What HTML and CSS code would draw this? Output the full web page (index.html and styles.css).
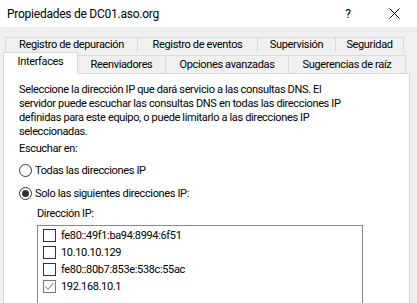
FILE: index.html
```html
<!DOCTYPE html>
<html lang="es">
<head>
    <meta charset="UTF-8">
    <title>Propiedades de DC01.aso.org</title>
    <link rel="stylesheet" href="styles.css">
</head>
<body>
    <div class="titlebar">
        <span class="title">Propiedades de DC01.aso.org</span>
        <span class="help">?</span>
        <span class="close">
            <svg width="11" height="11" viewBox="0 0 11 11"><path d="M0.5 0.5L10.5 10.5M10.5 0.5L0.5 10.5" stroke="#000" stroke-width="1"/></svg>
        </span>
    </div>

    <div class="dialog">
        <div class="tabs tabs-top">
            <div class="tab" style="width:133px">Registro de depuración</div>
            <div class="tab" style="width:121px">Registro de eventos</div>
            <div class="tab" style="width:79px">Supervisión</div>
            <div class="tab" style="width:69px">Seguridad</div>
        </div>
        <div class="tabs tabs-bottom">
            <div class="tab active" style="width:75px">Interfaces</div>
            <div class="tab" style="width:89px">Reenviadores</div>
            <div class="tab" style="width:124px">Opciones avanzadas</div>
            <div class="tab" style="width:118px">Sugerencias de raíz</div>
        </div>

        <div class="panel">
            <p class="intro">Seleccione la dirección IP que dará servicio a las consultas DNS. El<br>servidor puede escuchar las consultas DNS en todas las direcciones IP<br>definidas para este equipo, o puede limitarlo a las direcciones IP<br>seleccionadas.</p>
            <p class="label">Escuchar en:</p>

            <div class="option">
                <span class="radio"></span>
                <span>Todas las direcciones IP</span>
            </div>
            <div class="option">
                <span class="radio checked"></span>
                <span>Solo las siguientes direcciones IP:</span>
            </div>

            <div class="ip-section">
                <p class="label">Dirección IP:</p>
                <ul class="ip-list">
                    <li><span class="check"></span>fe80::49f1:ba94:8994:6f51</li>
                    <li><span class="check"></span>10.10.10.129</li>
                    <li><span class="check"></span>fe80::80b7:853e:538c:55ac</li>
                    <li><span class="check checked">
                        <svg width="11" height="11" viewBox="0 0 11 11"><path d="M1.5 5.5L4 8.5L9.5 2" fill="none" stroke="#7a7a7a" stroke-width="1"/></svg>
                    </span>192.168.10.1</li>
                </ul>
            </div>
        </div>
    </div>
</body>
</html>
```

FILE: styles.css
```css
body {
    margin: 0;
    font-family: Roboto, "Liberation Sans", sans-serif;
    font-size: 11px;
    letter-spacing: -0.35px;
    color: #000;
    background-color: #f0f0f0;
    overflow: hidden;
}
.titlebar {
    height: 27px;
    background-color: #fff;
    display: flex;
    align-items: center;
    padding-left: 7px;
}
.title {
    flex: 1;
    font-size: 12px;
    letter-spacing: -0.25px;
}
.help {
    width: 46px;
    text-align: center;
    font-size: 12px;
}
.close {
    width: 46px;
    display: flex;
    justify-content: center;
}
.dialog {
    padding-top: 10px;
}
.tabs {
    display: flex;
}
.tab {
    box-sizing: border-box;
    border: 1px solid #d9d9d9;
    border-bottom: none;
    margin-right: -1px;
    text-align: center;
    white-space: nowrap;
    background-color: #f0f0f0;
}
.tabs-top {
    margin-left: 5px;
    height: 15px;
}
.tabs-top .tab {
    height: 15px;
    line-height: 14px;
}
.tabs-bottom {
    margin-left: 3px;
    height: 21px;
    align-items: flex-end;
}
.tabs-bottom .tab {
    height: 18px;
    line-height: 17px;
}
.tabs-bottom .tab.active {
    line-height: 17px;
    background-color: #fff;
    position: relative;
    z-index: 1;
    margin-bottom: -1px;
    height: 22px;
}
.panel {
    box-sizing: border-box;
    margin-left: 3px;
    width: 407px;
    height: 240px;
    background-color: #fff;
    border: 1px solid #d9d9d9;
    padding: 9px 15px 0 15px;
}
p {
    margin: 0;
}
.intro {
    line-height: 14px;
    white-space: nowrap;
}
.label {
    margin-top: 2px;
    line-height: 15px;
}
.option {
    display: flex;
    align-items: center;
    gap: 3px;
    height: 17px;
    margin-top: 6px;
}
.radio {
    box-sizing: border-box;
    width: 13px;
    height: 13px;
    border: 1px solid #333;
    border-radius: 50%;
    display: flex;
    align-items: center;
    justify-content: center;
}
.radio.checked::after {
    content: "";
    width: 7px;
    height: 7px;
    border-radius: 50%;
    background-color: #333;
}
.ip-section {
    margin-left: 18px;
    margin-top: 4px;
}
.ip-list {
    list-style: none;
    margin: 4px 0 0 0;
    padding: 1px 0 0 5px;
    width: 326px;
    height: 90px;
    box-sizing: border-box;
    border: 1px solid #828790;
}
.ip-list li {
    display: flex;
    align-items: center;
    height: 17px;
    gap: 5px;
}
.check {
    box-sizing: border-box;
    width: 13px;
    height: 13px;
    border: 1px solid #333;
    display: flex;
    align-items: center;
    justify-content: center;
}
.check.checked {
    border-color: #7a7a7a;
}
```
